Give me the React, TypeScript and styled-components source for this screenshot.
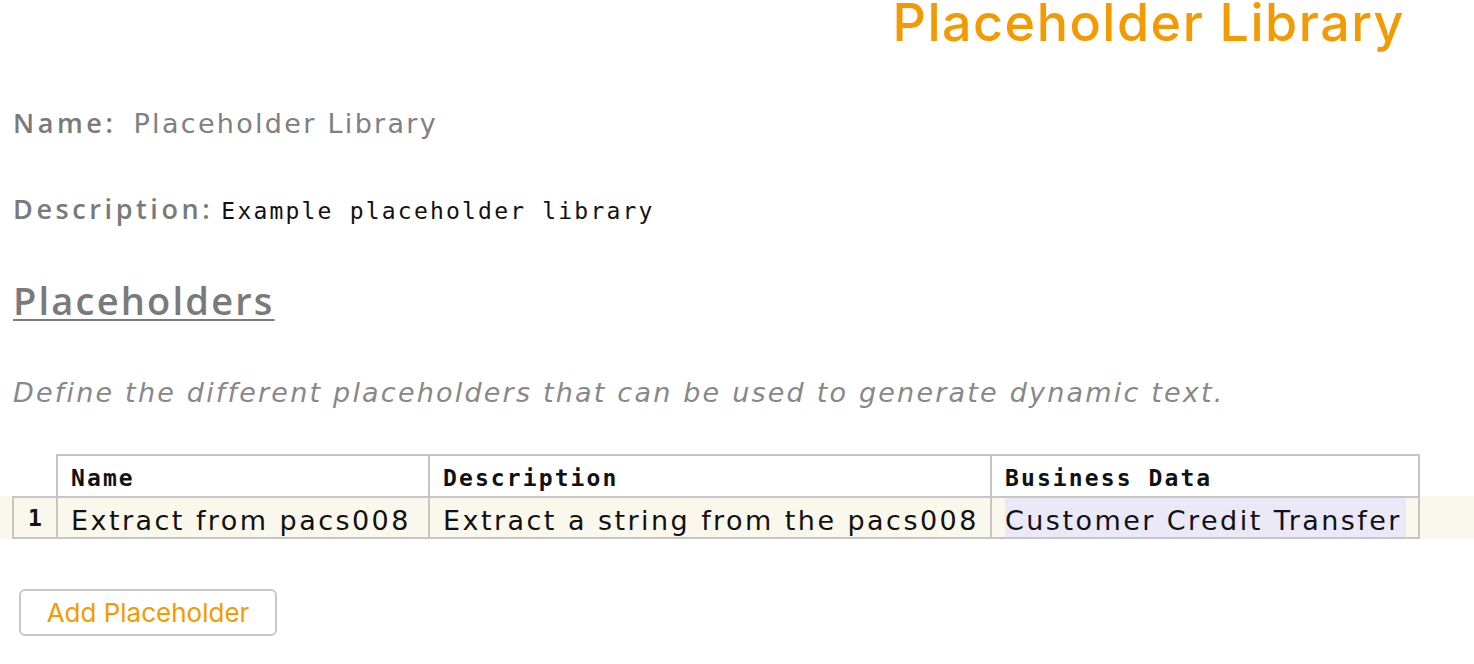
import styled, { createGlobalStyle } from "styled-components";

const GlobalStyle = createGlobalStyle`
    html, body {
        margin: 0;
        padding: 0;
        background: #ffffff;
    }
    body {
        font-family: "DejaVu Sans", "Noto Sans", sans-serif;
        color: #777777;
    }
`;

const ORANGE = "#f39a00";
const LINE = "#c6c6c6";
const MONO = `"DejaVu Sans Mono", "Liberation Mono", monospace`;
const SANS = `"DejaVu Sans", "Noto Sans", sans-serif`;
const LABEL = `"Open Sans", "Noto Sans", sans-serif`;

type Placeholder = {
    name: string;
    description: string;
    businessData: string;
};

const placeholders: Placeholder[] = [
    {
        name: "Extract from pacs008",
        description: "Extract a string from the pacs008",
        businessData: "Customer Credit Transfer",
    },
];

const columns = "44px 372px 562px 430px";

export default function App() {
    return (
        <>
            <GlobalStyle />
            <Page>
                <Title>Placeholder Library</Title>
                <Content>
                    <Field>
                        <Label>Name:</Label>
                        <NameValue>Placeholder Library</NameValue>
                    </Field>
                    <Field $gap={8}>
                        <Label>Description:</Label>
                        <MonoValue>Example placeholder library</MonoValue>
                    </Field>
                    <SectionHeading>Placeholders</SectionHeading>
                    <Hint>
                        Define the different placeholders that can be used to
                        generate dynamic text.
                    </Hint>
                </Content>
                <Table>
                    <HeaderRow>
                        <IndexHead />
                        <HeadCell>Name</HeadCell>
                        <HeadCell>Description</HeadCell>
                        <HeadCell $last>Business Data</HeadCell>
                    </HeaderRow>
                    {placeholders.map((p, i) => (
                        <DataStripe key={p.name}>
                            <DataRow>
                                <IndexCell>{i + 1}</IndexCell>
                                <Cell>
                                    <CellText>{p.name}</CellText>
                                </Cell>
                                <Cell>
                                    <CellText>{p.description}</CellText>
                                </Cell>
                                <Cell $last>
                                    <Chip>{p.businessData}</Chip>
                                </Cell>
                            </DataRow>
                        </DataStripe>
                    ))}
                </Table>
                <Actions>
                    <AddButton type="button">Add Placeholder</AddButton>
                </Actions>
            </Page>
        </>
    );
}

const Page = styled.div`
    width: 1474px;
    min-height: 664px;
`;

const Title = styled.h1`
    margin: -9px 0 0 0;
    padding: 0 69px 0 0;
    text-align: right;
    font-family: "Inter", sans-serif;
    font-size: 52px;
    font-weight: 500;
    letter-spacing: 1.5px;
    line-height: 63px;
    color: ${ORANGE};
`;

const Content = styled.div`
    padding-left: 13px;
`;

const Field = styled.div<{ $gap?: number }>`
    display: flex;
    align-items: baseline;
    gap: ${(p) => p.$gap ?? 17}px;
    height: 86px;
    padding-top: 50px;
    box-sizing: border-box;
`;

const Label = styled.span`
    font-family: ${LABEL};
    font-size: 27px;
    font-weight: 600;
    letter-spacing: 3.6px;
    color: #7a7a7a;
`;

const NameValue = styled.span`
    font-family: ${SANS};
    font-size: 27px;
    letter-spacing: 2.3px;
    color: #808080;
`;

const MonoValue = styled.span`
    font-family: ${MONO};
    font-size: 23px;
    letter-spacing: 2.2px;
    color: #111111;
`;

const SectionHeading = styled.h2`
    margin: 0;
    padding-top: 52px;
    font-family: ${LABEL};
    font-size: 38px;
    font-weight: 600;
    letter-spacing: 2.2px;
    line-height: 44px;
    color: #7a7a7a;
    text-decoration: underline;
    text-decoration-thickness: 2px;
    text-underline-offset: 4px;
`;

const Hint = styled.p`
    margin: 0;
    padding-top: 53px;
    font-family: ${SANS};
    font-style: italic;
    font-size: 27px;
    letter-spacing: 2.2px;
    line-height: 36px;
    color: #888888;
`;

const Table = styled.div`
    margin-top: 43px;
`;

const HeaderRow = styled.div`
    display: grid;
    grid-template-columns: ${columns};
    margin-left: 12px;
    height: 42px;
`;

const IndexHead = styled.div``;

const HeadCell = styled.div<{ $last?: boolean }>`
    border-top: 2px solid ${LINE};
    border-left: 2px solid ${LINE};
    border-right: ${(p) => (p.$last ? `2px solid ${LINE}` : "none")};
    padding: 6px 0 0 13px;
    font-family: ${MONO};
    font-size: 23px;
    font-weight: 700;
    letter-spacing: 2.1px;
    color: #111111;
    line-height: 32px;
`;

const DataStripe = styled.div`
    background: #faf8ec;
`;

const DataRow = styled.div`
    display: grid;
    grid-template-columns: ${columns};
    margin-left: 12px;
    height: 43px;
`;

const Cell = styled.div<{ $last?: boolean }>`
    border-top: 2px solid ${LINE};
    border-bottom: 2px solid ${LINE};
    border-left: 2px solid ${LINE};
    border-right: ${(p) => (p.$last ? `2px solid ${LINE}` : "none")};
    padding: 0 12px 0 13px;
    display: flex;
    align-items: center;
    font-family: ${SANS};
    font-size: 27px;
    letter-spacing: 2.45px;
    color: #111111;
    white-space: nowrap;
    overflow: hidden;
`;

const IndexCell = styled(Cell)`
    justify-content: center;
    padding: 0;
    font-family: ${MONO};
    font-size: 23px;
    font-weight: 700;
    letter-spacing: 0;
`;

const CellText = styled.span`
    display: block;
    padding-top: 6px;
`;

const Chip = styled(CellText)`
    display: flex;
    align-items: center;
    height: 100%;
    width: 100%;
    box-sizing: border-box;
    background: #ebe8f8;
`;

const Actions = styled.div`
    padding: 50px 0 0 19px;
`;

const AddButton = styled.button`
    width: 258px;
    height: 47px;
    border: 2px solid #c8c8c8;
    border-radius: 6px;
    background: #ffffff;
    color: ${ORANGE};
    font-family: "Inter", sans-serif;
    font-size: 26px;
    cursor: pointer;
`;
